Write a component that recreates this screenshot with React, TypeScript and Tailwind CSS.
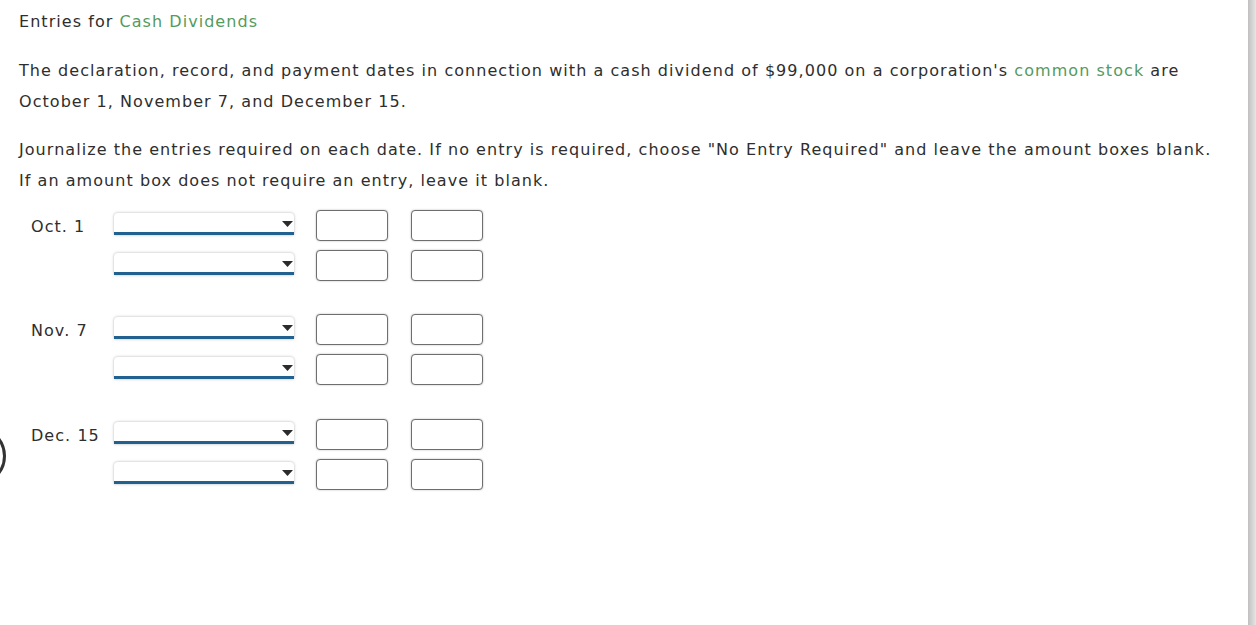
import React from "react";

const font = { fontFamily: '"DejaVu Sans", Verdana, sans-serif' };

function Dropdown() {
  return (
    <div className="relative mt-[3px] h-[22px] w-[180px] rounded-t-[4px] bg-white border-b-[3px] border-[#22608f] shadow-[0_0_3px_rgba(0,0,0,0.3)]">
      <svg className="absolute right-[1px] top-[8px]" width="11" height="6" viewBox="0 0 11 6">
        <path d="M0 0 L11 0 L5.5 6 Z" fill="#2b2b2b" />
      </svg>
    </div>
  );
}

function Box() {
  return (
    <div className="h-[31px] w-[72px] rounded-[4px] border border-[#6e6e6e] bg-white shadow-[0_0_2px_rgba(0,0,0,0.3)]" />
  );
}

function Row({ label }: { label?: string }) {
  return (
    <div className="flex h-[31px] items-start">
      <div className="w-[83px] pt-[1px] leading-[31px] text-[16px]">{label ?? ""}</div>
      <Dropdown />
      <div className="ml-[22px]">
        <Box />
      </div>
      <div className="ml-[23px]">
        <Box />
      </div>
    </div>
  );
}

function Group({ label, className }: { label: string; className?: string }) {
  return (
    <div className={"flex flex-col gap-[9px] " + (className ?? "")}>
      <Row label={label} />
      <Row />
    </div>
  );
}

export default function App() {
  return (
    <div className="relative h-[625px] w-[1256px] overflow-hidden bg-white text-[#2e2e2e] tracking-[1.05px]" style={font}>
      <div className="absolute left-[-54px] top-[426px] h-[60px] w-[60px] rounded-full border-[3px] border-[#333]" />
      <div className="absolute right-0 top-0 h-[625px] w-[8px] bg-gradient-to-r from-[#c0c0c0] to-[#e6e6e6]" />
      <div className="pl-[19px] pt-[6px] text-[16px] leading-[31px]">
        <div>
          Entries for <span className="text-[#559a5e]">Cash Dividends</span>
        </div>
        <p className="mt-[18px]">
          The declaration, record, and payment dates in connection with a cash dividend of $99,000 on a corporation's{" "}
          <span className="text-[#559a5e]">common stock</span> are
          <br />
          October 1, November 7, and December 15.
        </p>
        <p className="mt-[17px]">
          Journalize the entries required on each date. If no entry is required, choose "No Entry Required" and leave the amount boxes blank.
          <br />
          If an amount box does not require an entry, leave it blank.
        </p>
        <div className="ml-[12px] mt-[14px] flex flex-col">
          <Group label="Oct. 1" />
          <Group label="Nov. 7" className="mt-[33px]" />
          <Group label="Dec. 15" className="mt-[34px]" />
        </div>
      </div>
    </div>
  );
}
